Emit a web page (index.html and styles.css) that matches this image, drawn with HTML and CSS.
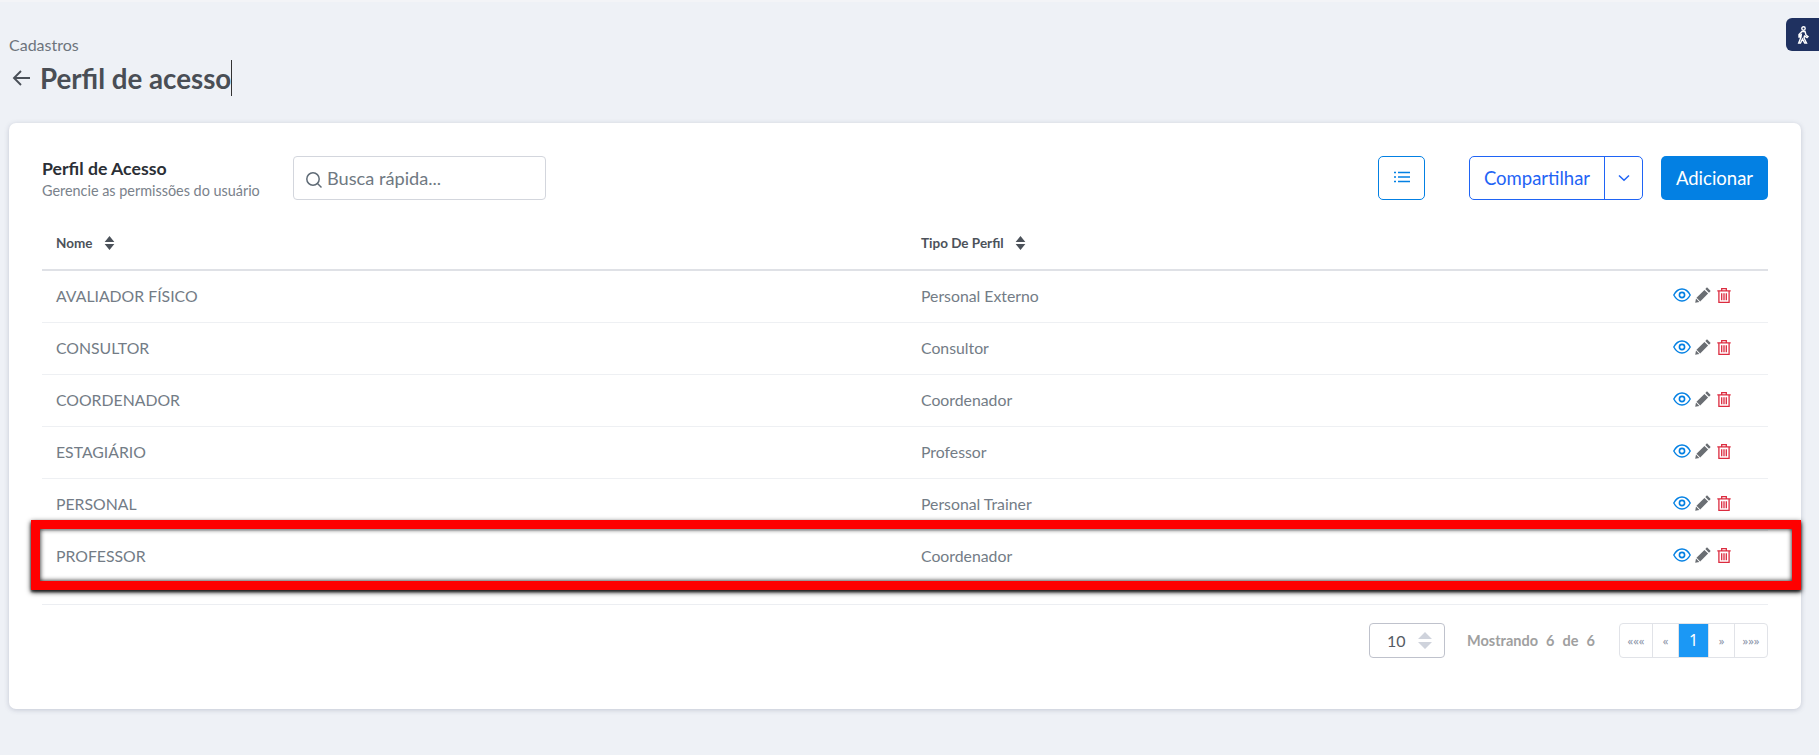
FILE: index.html
```html
<!DOCTYPE html>
<html lang="en">
<head>
    <meta charset="UTF-8">
    <title>Perfil de acesso</title>
    <link rel="stylesheet" href="styles.css">
</head>
<body>
<svg class="icon-defs" width="0" height="0">
    <symbol id="i-eye" viewBox="0 0 18 14">
        <path d="M.8 7C2.800 3.200 5.600 1 9 1s6.200 2.200 8.200 6c-2 3.800-4.800 6-8.200 6S2.800 10.800.8 7Z" fill="none" stroke="currentColor" stroke-width="1.400"/>
        <circle cx="9" cy="7" r="2.600" fill="none" stroke="currentColor" stroke-width="1.600"/>
    </symbol>
    <symbol id="i-pencil" viewBox="0 0 16 16">
        <path d="M12 .3 15.700 4 14 5.700 10.300 2ZM9.400 2.900 13.100 6.600 5.200 14.500 1.500 10.800ZM1 11.600 4.400 15 .2 15.800Z" fill="currentColor"/>
    </symbol>
    <symbol id="i-trash" viewBox="0 0 14 15">
        <path d="M.3 2.800h13.400M4.700 2.800V.7h4.600v2.100M1.900 2.800v11.600h10.200V2.800" fill="none" stroke="currentColor" stroke-width="1.300"/>
        <path d="M4.700 5.200v7M7 5.200v7M9.300 5.200v7" fill="none" stroke="currentColor" stroke-width="1.300"/>
    </symbol>
    <symbol id="i-sort" viewBox="0 0 10 13">
        <path d="M5 0 9.500 5.500H.5ZM5 13 .5 7.500h9Z" fill="currentColor"/>
    </symbol>
</svg>

<div class="help-tab">
    <svg width="16" height="18" viewBox="0 0 16 18" fill="none" stroke="#fff" stroke-width="1.400">
        <circle cx="8.500" cy="2.500" r="1.700"/>
        <path d="M7 5.500h3l1 3.500 2 1.500-1 1-2.500-1.500L9 12l2.500 5h-1.800L7.500 13 5.500 17H3.700l2.300-6 .3-2.500-1.300.8V11H4V8.500Z"/>
    </svg>
</div>

<div class="page-head">
    <div class="crumb">Cadastros</div>
    <div class="title-row">
        <svg class="back-icon" width="20" height="18" viewBox="0 0 20 18" fill="none" stroke="#4a5058" stroke-width="1.900">
            <path d="M18 9H2M9 2 2 9l7 7"/>
        </svg>
        <h1>Perfil de acesso</h1>
        <span class="text-caret"></span>
    </div>
</div>

<div class="card">
    <div class="toolbar">
        <div class="toolbar-title">
            <h2>Perfil de Acesso</h2>
            <p>Gerencie as permissões do usuário</p>
        </div>
        <div class="search">
            <svg width="18" height="18" viewBox="0 0 18 18" fill="none" stroke="#5f6b76" stroke-width="1.500">
                <circle cx="8" cy="8" r="6.200"/>
                <path d="M12.500 12.500 16.500 16.500"/>
            </svg>
            <span>Busca rápida...</span>
        </div>
        <button class="btn-columns">
            <svg width="18" height="12" viewBox="0 0 18 12" fill="none" stroke="#0380e3" stroke-width="1.500">
                <path d="M5 1.500h12M5 6h12M5 10.500h12M1 1.500h2M1 6h2M1 10.500h2"/>
            </svg>
        </button>
        <div class="btn-share">
            <span class="share-label">Compartilhar</span>
            <span class="share-arrow">
                <svg width="12" height="8" viewBox="0 0 12 8" fill="none" stroke="#1f64f5" stroke-width="1.500">
                    <path d="M1 1.500 6 6.300l5-4.800"/>
                </svg>
            </span>
        </div>
        <button class="btn-add">Adicionar</button>
    </div>

    <table class="list">
        <thead>
            <tr>
                <th class="col-name">Nome <svg class="sort" width="11" height="14"><use href="#i-sort"/></svg></th>
                <th>Tipo De Perfil <svg class="sort" width="11" height="14"><use href="#i-sort"/></svg></th>
                <th></th>
            </tr>
        </thead>
        <tbody>
            <tr>
                <td>AVALIADOR FÍSICO</td>
                <td>Personal Externo</td>
                <td class="actions">
                    <svg class="eye" width="18" height="14"><use href="#i-eye"/></svg>
                    <svg class="pencil" width="16" height="16"><use href="#i-pencil"/></svg>
                    <svg class="trash" width="14" height="15"><use href="#i-trash"/></svg>
                </td>
            </tr>
            <tr>
                <td>CONSULTOR</td>
                <td>Consultor</td>
                <td class="actions">
                    <svg class="eye" width="18" height="14"><use href="#i-eye"/></svg>
                    <svg class="pencil" width="16" height="16"><use href="#i-pencil"/></svg>
                    <svg class="trash" width="14" height="15"><use href="#i-trash"/></svg>
                </td>
            </tr>
            <tr>
                <td>COORDENADOR</td>
                <td>Coordenador</td>
                <td class="actions">
                    <svg class="eye" width="18" height="14"><use href="#i-eye"/></svg>
                    <svg class="pencil" width="16" height="16"><use href="#i-pencil"/></svg>
                    <svg class="trash" width="14" height="15"><use href="#i-trash"/></svg>
                </td>
            </tr>
            <tr>
                <td>ESTAGIÁRIO</td>
                <td>Professor</td>
                <td class="actions">
                    <svg class="eye" width="18" height="14"><use href="#i-eye"/></svg>
                    <svg class="pencil" width="16" height="16"><use href="#i-pencil"/></svg>
                    <svg class="trash" width="14" height="15"><use href="#i-trash"/></svg>
                </td>
            </tr>
            <tr>
                <td>PERSONAL</td>
                <td>Personal Trainer</td>
                <td class="actions">
                    <svg class="eye" width="18" height="14"><use href="#i-eye"/></svg>
                    <svg class="pencil" width="16" height="16"><use href="#i-pencil"/></svg>
                    <svg class="trash" width="14" height="15"><use href="#i-trash"/></svg>
                </td>
            </tr>
            <tr>
                <td>PROFESSOR</td>
                <td>Coordenador</td>
                <td class="actions">
                    <svg class="eye" width="18" height="14"><use href="#i-eye"/></svg>
                    <svg class="pencil" width="16" height="16"><use href="#i-pencil"/></svg>
                    <svg class="trash" width="14" height="15"><use href="#i-trash"/></svg>
                </td>
            </tr>
        </tbody>
    </table>

    <div class="list-footer">
        <div class="page-size">
            <span>10</span>
            <svg width="14" height="17" viewBox="0 0 14 17" fill="#cfd3dc">
                <path d="M7 0 14 7H0ZM7 17 0 10h14Z"/>
            </svg>
        </div>
        <div class="showing"><span>Mostrando</span><span>6</span><span>de</span><span>6</span></div>
        <div class="pager">
            <a class="first">«««</a>
            <a class="prev">«</a>
            <a class="current">1</a>
            <a class="next">»</a>
            <a class="last">»»»</a>
        </div>
    </div>

    <div class="highlight"></div>
</div>
</body>
</html>
```

FILE: styles.css
```css
* {
    box-sizing: border-box;
}

body {
    margin: 0;
    height: 755px;
    overflow: hidden;
    background-color: #eef1f6;
    border-top: 2px solid #f3f4f7;
    font-family: 'Lato', sans-serif;
    color: #6f7982;
}

.icon-defs {
    position: absolute;
}

.help-tab {
    position: absolute;
    top: 18px;
    right: 0;
    width: 33px;
    height: 33px;
    display: flex;
    align-items: center;
    justify-content: center;
    background-color: #1f3160;
    border-radius: 6px 0 0 6px;
}

.page-head {
    height: 121px;
    padding: 34px 0 0 9px;
}

.crumb {
    font-size: 16px;
    line-height: 18px;
    color: #6d747c;
}

.title-row {
    display: flex;
    align-items: center;
    height: 36px;
    margin-top: 6px;
}

.back-icon {
    margin-left: 3px;
    margin-right: 8px;
}

h1 {
    margin: 0;
    font-size: 27.7px;
    font-weight: 700;
    color: #494e55;
}

.text-caret {
    width: 1px;
    height: 36px;
    background-color: #333;
}

.card {
    position: relative;
    margin: 0 18px 0 9px;
    height: 586px;
    padding: 33px 33px 0 33px;
    background-color: #fff;
    border-radius: 7px;
    box-shadow: 0 1px 5px rgba(70, 80, 110, 0.25);
}

.toolbar {
    display: flex;
    align-items: center;
    height: 44px;
}

.toolbar-title {
    width: 251px;
}

h2 {
    margin: 0;
    font-size: 17.7px;
    line-height: 22px;
    font-weight: 700;
    color: #2b2f36;
}

.toolbar-title p {
    margin: 2px 0 0;
    font-size: 14.4px;
    line-height: 17px;
    color: #7a828b;
}

.search {
    display: flex;
    align-items: center;
    gap: 4px;
    width: 253px;
    height: 44px;
    padding-left: 11px;
    border: 1px solid #d3d6dd;
    border-radius: 4px;
    font-size: 18.2px;
    color: #6f7982;
}

.search svg {
    margin-top: 3px;
}

.btn-columns {
    margin-left: auto;
    width: 47px;
    height: 44px;
    padding: 0;
    background-color: #fff;
    border: 1px solid #0380e3;
    border-radius: 5px;
}

.btn-share {
    display: flex;
    margin-left: 44px;
    width: 174px;
    height: 44px;
    border: 1px solid #1f64f5;
    border-radius: 5px;
    color: #1f64f5;
    font-size: 18.5px;
}

.share-label {
    flex: 1;
    display: flex;
    align-items: center;
    justify-content: center;
    border-right: 1px solid #1f64f5;
}

.share-arrow {
    width: 37px;
    display: flex;
    align-items: center;
    justify-content: center;
}

.btn-add {
    margin-left: 18px;
    width: 107px;
    height: 44px;
    padding: 0;
    background-color: #0380e3;
    color: #fff;
    border: none;
    border-radius: 5px;
    font-family: inherit;
    font-size: 18.5px;
}

.list {
    width: 100%;
    margin-top: 16px;
    border-collapse: collapse;
    table-layout: fixed;
}

.list th {
    height: 54px;
    padding: 0 14px;
    text-align: left;
    font-size: 13.5px;
    font-weight: 700;
    color: #4c525a;
    border-bottom: 2px solid #dfe1e6;
}

.col-name {
    width: 865px;
}

.sort {
    margin-left: 8px;
    vertical-align: -2px;
    color: #4c525a;
}

.list td {
    height: 52px;
    padding: 0 14px 1px;
    font-size: 15.8px;
    color: #737c86;
    border-bottom: 1px solid #eef0f3;
}

.list td.actions {
    padding: 0 37px 4px 0;
    text-align: right;
    white-space: nowrap;
    font-size: 14px;
}

.actions svg {
    vertical-align: middle;
    margin-left: 1px;
}

.actions .trash {
    margin-left: 2px;
}

.eye {
    color: #0380e3;
}

.pencil {
    color: #6a6e73;
}

.trash {
    color: #dc2b3f;
}

.list-footer {
    display: flex;
    align-items: center;
    justify-content: flex-end;
    height: 54px;
    margin-top: 21px;
    padding-top: 18px;
    border-top: 1px solid #eceef2;
}

.page-size {
    display: flex;
    align-items: center;
    gap: 12px;
    width: 76px;
    height: 35px;
    padding-left: 17px;
    border: 1px solid #bfc2cc;
    border-radius: 4px;
    font-size: 16px;
    color: #555b63;
}

.showing {
    display: flex;
    gap: 8px;
    margin-left: 22px;
    width: 152px;
    font-size: 14.5px;
    font-weight: 700;
    color: #a0a0a0;
}

.pager {
    display: flex;
    height: 35px;
    border: 1px solid #e1e3e8;
    border-radius: 4px;
    font-family: 'Noto Sans', sans-serif;
    font-size: 11px;
    color: #8a93a8;
}

.pager a {
    display: flex;
    align-items: center;
    justify-content: center;
    border-right: 1px solid #e1e3e8;
}

.pager a:last-child {
    border-right: none;
}

.pager .first {
    width: 33px;
}

.pager .prev {
    width: 26px;
}

.pager .current {
    width: 30px;
    background-color: #1b98f5;
    color: #fff;
    font-size: 16px;
}

.pager .next {
    width: 26px;
}

.pager .last {
    width: 32px;
}

.highlight {
    position: absolute;
    left: 22px;
    top: 397px;
    width: 1770px;
    height: 70px;
    border: 9px solid #ff0000;
    box-shadow: 0 2px 5px rgba(0, 0, 0, 0.95), 0 2px 2px rgba(0, 0, 0, 0.5), inset 0 0 5px rgba(0, 0, 0, 0.95);
}
```
